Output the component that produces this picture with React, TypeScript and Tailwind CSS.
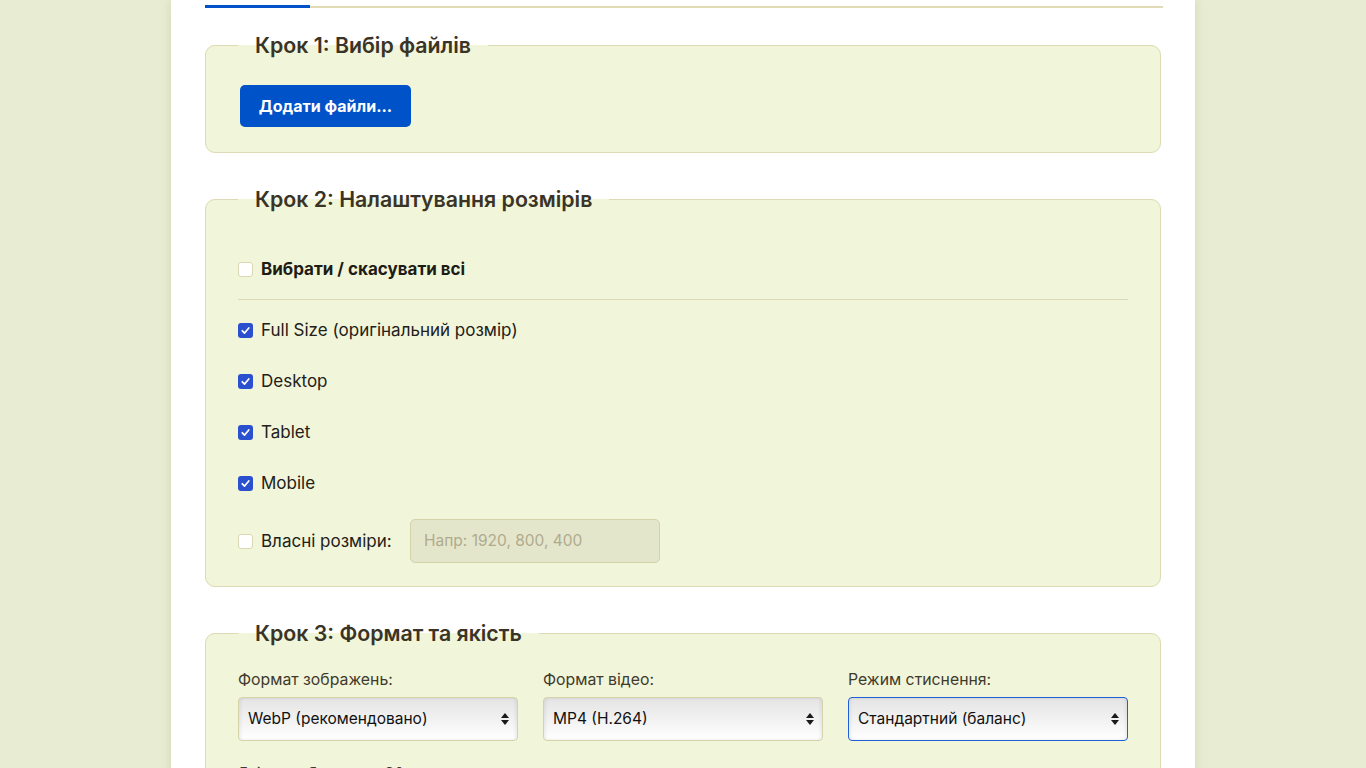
import React from "react";

const font = { fontFamily: "Inter, 'Noto Sans', 'DejaVu Sans', sans-serif" };

function Check({ checked }: { checked: boolean }) {
  if (checked) {
    return (
      <span className="flex h-[15px] w-[15px] shrink-0 items-center justify-center rounded-[3px] bg-[#2a4fcf]">
        <svg width="11" height="11" viewBox="0 0 12 12">
          <path d="M2.5 6.3 L5 8.8 L9.6 3.2" fill="none" stroke="white" strokeWidth="1.9" strokeLinecap="round" strokeLinejoin="round" />
        </svg>
      </span>
    );
  }
  return <span className="h-[15px] w-[15px] shrink-0 rounded-[3px] border border-[#dcd8b4] bg-white" />;
}

function Row({ checked, label, className }: { checked: boolean; label: string; className?: string }) {
  return (
    <div className={"flex h-[24px] items-center gap-[8px] " + (className ?? "")}>
      <Check checked={checked} />
      <span className="text-[17px] leading-[26px] text-[#222018]">{label}</span>
    </div>
  );
}

function Arrows() {
  return (
    <div className="flex flex-col items-center gap-[2px]">
      <svg width="8" height="5" viewBox="0 0 8 5"><path d="M4 0 L8 5 L0 5 Z" fill="#1a1a1a" /></svg>
      <svg width="8" height="5" viewBox="0 0 8 5"><path d="M0 0 L8 0 L4 5 Z" fill="#1a1a1a" /></svg>
    </div>
  );
}

function Select({ label, value, focused }: { label: string; value: string; focused?: boolean }) {
  return (
    <div className="flex flex-col">
      <div className="h-[20px] text-[15.8px] leading-[20px] text-[#3f3a2c]">{label}</div>
      <div
        className={
          "mt-[7px] flex h-[44px] items-center justify-between rounded-[4px] border bg-gradient-to-b from-[#e4e4e4] to-[#ffffff] pl-[9px] pr-[8px] shadow-[inset_2px_0_3px_rgba(0,0,0,0.06),inset_-2px_0_3px_rgba(0,0,0,0.06)] " +
          (focused ? "border-[#1d5fd6]" : "border-[#d6d2aa]")
        }
      >
        <span className="text-[15.5px] text-[#111]">{value}</span>
        <Arrows />
      </div>
    </div>
  );
}

const legendCls = "px-[17px] text-[21.3px] font-semibold leading-[24px] text-[#3a3426]";

export default function App() {
  return (
    <div className="min-h-screen bg-[#e8ecd2]" style={font}>
      <div className="mx-auto min-h-screen w-[1024px] bg-white px-[34px] shadow-[0_0_10px_rgba(120,120,60,0.18)]">
        <div className="flex h-[8px] w-[958px] items-end">
          <div className="h-[3px] w-[105px] bg-[#0052c8]" />
          <div className="h-[2px] flex-1 bg-[#e0dbb4]" />
        </div>

        <fieldset className="mt-[25px] rounded-[10px] border border-[#dedbb4] bg-[#f1f5da] px-[32px] pb-[25px] pt-[28px]">
          <legend className={legendCls}>Крок 1: Вибір файлів</legend>
          <button className="ml-[2px] h-[42px] w-[171px] rounded-[5px] bg-[#0052c8] text-[16px] font-bold text-white">
            Додати файли...
          </button>
        </fieldset>

        <fieldset className="mt-[34px] rounded-[10px] border border-[#dedbb4] bg-[#f1f5da] px-[32px] pb-[23px] pt-[46px]">
          <legend className={legendCls}>Крок 2: Налаштування розмірів</legend>
          <div className="flex h-[24px] items-center gap-[8px]">
            <Check checked={false} />
            <span className="text-[17px] font-bold leading-[26px] text-[#1e1c14]">Вибрати / скасувати всі</span>
          </div>
          <div className="mt-[18px] h-px bg-[#ddd9b6]" />
          <Row checked label="Full Size (оригінальний розмір)" className="mt-[18px]" />
          <Row checked label="Desktop" className="mt-[27px]" />
          <Row checked label="Tablet" className="mt-[27px]" />
          <Row checked label="Mobile" className="mt-[27px]" />
          <div className="mt-[24px] flex h-[44px] items-center">
            <Check checked={false} />
            <span className="ml-[8px] w-[132px] text-[17px] leading-[26px] text-[#222018]">Власні розміри:</span>
            <div className="ml-[17px] flex h-[44px] w-[250px] items-center rounded-[5px] border border-[#d6d1a8] bg-[#e4e6cc] px-[13px]">
              <span className="text-[15.5px] text-[#b0ab8c]">Напр: 1920, 800, 400</span>
            </div>
          </div>
        </fieldset>

        <fieldset className="mt-[34px] rounded-[10px] border border-[#dedbb4] bg-[#f1f5da] px-[32px] pb-[25px] pt-[25px]">
          <legend className={legendCls}>Крок 3: Формат та якість</legend>
          <div className="grid grid-cols-3 gap-x-[25px]">
            <Select label="Формат зображень:" value="WebP (рекомендовано)" />
            <Select label="Формат відео:" value="MP4 (H.264)" />
            <Select label="Режим стиснення:" value="Стандартний (баланс)" focused />
          </div>
          <div className="mt-[23px] h-[20px] text-[15.8px] leading-[20px] text-[#3f3a2c]">Якість зображень: 80</div>
          <div className="mt-[10px] h-[40px]" />
        </fieldset>
      </div>
    </div>
  );
}
